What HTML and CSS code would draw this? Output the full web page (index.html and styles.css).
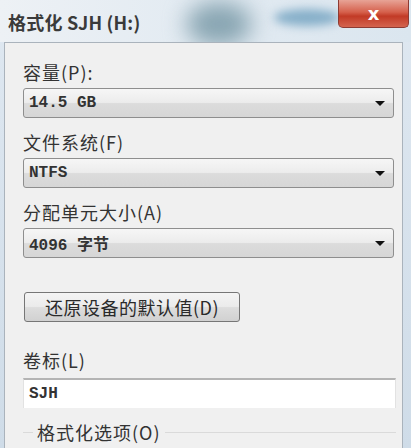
FILE: index.html
```html
<!DOCTYPE html>
<html lang="zh-CN">
<head>
  <meta charset="UTF-8" />
  <meta name="viewport" content="width=device-width, initial-scale=1.0"/>
  <title>格式化 SJH (H:)</title>
  <link rel="stylesheet" href="styles.css">
</head>
<body>

<div class="window">
  <header class="titlebar">
    <span class="blob blob-dark"></span>
    <span class="blob blob-light"></span>
    <h1 class="title">格式化 SJH (H:)</h1>
    <button class="close-btn" title="关闭">x</button>
  </header>

  <main class="dialog">
    <label class="field-label first">容量(P):</label>
    <div class="combo"><span class="value">14.5 GB</span><span class="arrow"></span></div>

    <label class="field-label">文件系统(F)</label>
    <div class="combo"><span class="value">NTFS</span><span class="arrow"></span></div>

    <label class="field-label">分配单元大小(A)</label>
    <div class="combo"><span class="value">4096 字节</span><span class="arrow"></span></div>

    <button class="restore-btn">还原设备的默认值(D)</button>

    <label class="field-label volume">卷标(L)</label>
    <div class="textbox">SJH</div>

    <fieldset class="options">
      <legend>格式化选项(O)</legend>
    </fieldset>
  </main>
</div>

</body>
</html>
```

FILE: styles.css
```css
body {
  margin: 0;
  width: 411px;
  height: 448px;
  overflow: hidden;
  font-family: "Noto Sans CJK SC", "Noto Sans", sans-serif;
  color: #222;
}

.window {
  height: 448px;
  background: linear-gradient(to bottom, #dfe8f1, #cfdce8);
  display: flex;
  flex-direction: column;
}

.titlebar {
  position: relative;
  height: 42px;
  flex-shrink: 0;
  display: flex;
  align-items: flex-start;
  background: linear-gradient(to right, #edf1f5 0%, #e3ebf2 45%, #dbe6ef 100%);
  overflow: hidden;
}

.blob {
  position: absolute;
  border-radius: 50%;
}

.blob-dark {
  left: 186px;
  top: 2px;
  width: 66px;
  height: 44px;
  background: #88a5b2;
  filter: blur(11px);
}

.blob-light {
  left: 274px;
  top: 9px;
  width: 66px;
  height: 17px;
  background: #86afc9;
  filter: blur(5px);
}

.title {
  position: relative;
  margin: 9px 0 0 8px;
  font-size: 18px;
  font-weight: 600;
  color: #3a3a3a;
  letter-spacing: 0.2px;
}

.close-btn {
  position: absolute;
  right: 2px;
  top: 0;
  width: 71px;
  height: 28px;
  border: 1px solid #8d3b33;
  border-top: none;
  border-radius: 0 0 5px 5px;
  background: linear-gradient(to bottom, #e7a396 0%, #d5604c 45%, #c23a26 60%, #d4644f 100%);
  color: #fff;
  font-family: "DejaVu Sans", sans-serif;
  font-size: 18px;
  font-weight: bold;
  line-height: 24px;
  padding: 0;
}

.dialog {
  flex: 1;
  margin: 0 8px 0 4px;
  background: #f0f0f0;
  border: 1px solid #aab3bc;
  border-bottom: none;
  padding: 0 8px 0 18px;
  display: flex;
  flex-direction: column;
}

.field-label {
  display: block;
  height: 24px;
  line-height: 24px;
  font-size: 18px;
  letter-spacing: 1px;
  color: #333;
  margin-top: 12px;
  margin-bottom: 4px;
}

.field-label.first {
  margin-top: 17px;
}

.combo {
  height: 28px;
  border: 1px solid #8e8e8e;
  border-radius: 3px;
  background: linear-gradient(to bottom, #f6f6f6 0%, #ececec 48%, #dcdcdc 52%, #d6d6d6 100%);
  display: flex;
  align-items: center;
  justify-content: space-between;
  padding: 0 8px 0 5px;
}

.value {
  font-family: "Liberation Mono", "Noto Sans CJK SC", monospace;
  font-size: 16px;
  font-weight: bold;
  color: #333;
}

.arrow {
  width: 0;
  height: 0;
  border-left: 5px solid transparent;
  border-right: 5px solid transparent;
  border-top: 5px solid #111;
}

.restore-btn {
  align-self: flex-start;
  margin-top: 34px;
  margin-left: 1px;
  width: 216px;
  height: 30px;
  border: 1px solid #767676;
  border-radius: 3px;
  background: linear-gradient(to bottom, #f4f4f4 0%, #ebebeb 48%, #dddddd 52%, #d1d1d1 100%);
  font-family: "Noto Sans CJK SC", sans-serif;
  font-size: 18px;
  letter-spacing: 0.5px;
  color: #2a2a2a;
  padding: 0;
}

.field-label.volume {
  margin-top: 26px;
  margin-bottom: 6px;
}

.textbox {
  height: 28px;
  margin-right: -2px;
  background: #fff;
  border-top: 2px solid #b4b4b4;
  border-left: 1px solid #e2e2e2;
  border-right: 1px solid #e2e2e2;
  line-height: 28px;
  padding-left: 5px;
  font-family: "Liberation Mono", monospace;
  font-size: 16px;
  font-weight: bold;
  color: #333;
}

.options {
  margin: 14px -2px 0 0;
  padding: 0;
  border: none;
  border-top: 1px solid #dadada;
  height: 20px;
}

.options legend {
  margin-left: 10px;
  padding: 0 4px;
  font-size: 18px;
  letter-spacing: 1px;
  color: #333;
  line-height: 20px;
}
```
